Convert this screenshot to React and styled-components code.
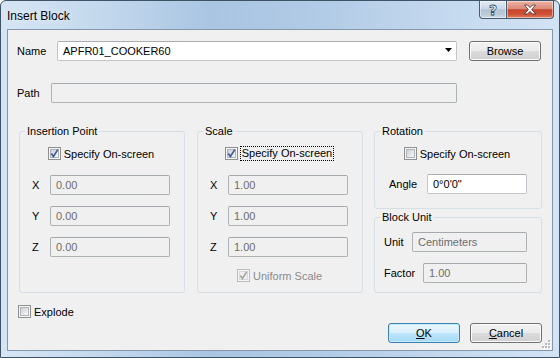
import styled, { createGlobalStyle } from "styled-components";

const GlobalStyle = createGlobalStyle`
  html, body { margin: 0; padding: 0; background: #fff; }
  body { font-family: "Liberation Sans", Arial, sans-serif; font-size: 11px; color: #000; }
`;

const Window = styled.div`
  width: 560px;
  height: 358px;
  box-sizing: border-box;
  display: flex;
  flex-direction: column;
  border: 1px solid #3f5367;
  border-radius: 6px 6px 0 0;
  background: linear-gradient(90deg, #d6e5f4 0%, #c3d8ed 18%, #a9c5e2 38%, #b2cbe6 58%, #c6daef 82%, #d2e3f4 100%);
  overflow: hidden;
`;

const TitleBar = styled.div`
  height: 28px;
  display: flex;
  align-items: flex-start;
`;

const TitleText = styled.span`
  margin: 8px 0 0 6px;
  font-size: 12px;
  line-height: 15px;
  text-shadow: 0 0 6px rgba(255, 255, 255, 0.9);
`;

const CaptionButtons = styled.div`
  margin-left: auto;
  margin-right: 5px;
  display: flex;
`;

const CaptionButton = styled.div`
  width: ${p => p.$w}px;
  height: 18px;
  box-sizing: border-box;
  display: grid;
  place-items: center;
  border: 1px solid #4a5c70;
  border-top: none;
  border-left-width: ${p => (p.$close ? 0 : 1)}px;
  border-radius: ${p => (p.$close ? "0 0 4px 0" : "0 0 0 4px")};
  background: ${p =>
    p.$close
      ? "linear-gradient(#ebb3a6 0%, #dc8a78 45%, #c6442d 52%, #cf5238 78%, #e27d5f 100%)"
      : "linear-gradient(#e4ecf4 0%, #cad7e5 45%, #b3c4d6 52%, #bccbdb 80%, #cfdbe8 100%)"};
  box-shadow: inset 0 0 0 1px rgba(255, 255, 255, 0.45);
`;

const HelpGlyph = styled.span`
  font-family: "DejaVu Sans", sans-serif;
  font-weight: bold;
  font-size: 14px;
  line-height: 14px;
  color: #fff;
  -webkit-text-stroke: 0.8px #3b4656;
`;

const Client = styled.div`
  flex: 1;
  position: relative;
  margin: 0 6px 6px 6px;
  border: 1px solid #8797ab;
  background: #f0f0f0;
  padding: 11px 10px 0 9px;
  display: flex;
  flex-direction: column;
`;

const Row = styled.div`
  display: flex;
  align-items: center;
  height: 20px;
  margin-top: ${p => p.$mt || 0}px;
  margin-left: ${p => p.$ml || 0}px;
`;

const Label = styled.span`
  width: ${p => p.$w}px;
  flex-shrink: 0;
  white-space: nowrap;
`;

const TextBox = styled.div`
  width: ${p => p.$w}px;
  height: 20px;
  box-sizing: border-box;
  display: flex;
  align-items: center;
  padding-left: 5px;
  border: 1px solid ${p => (p.$disabled ? "#adb2b5" : "#c2c6cc")};
  border-top-color: ${p => (p.$disabled ? "#a4a9ad" : "#abadb3")};
  border-radius: 2px;
  background: ${p => (p.$disabled ? "#f0f0f0" : "#fff")};
  color: ${p => (p.$disabled ? "#6d6d6d" : "#000")};
  white-space: nowrap;
`;

const Combo = styled(TextBox)`
  padding-right: 4px;
  justify-content: space-between;
`;

const Button = styled.div`
  width: 72px;
  height: 20px;
  box-sizing: border-box;
  display: grid;
  place-items: center;
  border: 1px solid ${p => (p.$default ? "#3c7fb1" : "#707070")};
  border-radius: 3px;
  background: ${p =>
    p.$default
      ? "linear-gradient(#eaf6fd 0%, #d9f0fc 50%, #bee6fd 50%, #a7d9f5 100%)"
      : "linear-gradient(#f2f2f2 0%, #ebebeb 50%, #dddddd 50%, #cfcfcf 100%)"};
  box-shadow: inset 0 0 0 1px ${p => (p.$default ? "#c4ebfd" : "#fcfcfc")};
  u { text-decoration: underline; }
`;

const GroupsRow = styled.div`
  display: grid;
  grid-template-columns: 166px 166px 167px;
  column-gap: 12px;
  margin: 22px 0 0 2px;
  & > :nth-child(3) { margin-left: -1px; }
`;

const Stack = styled.div`
  display: flex;
  flex-direction: column;
  gap: 2px;
`;

const Group = styled.fieldset`
  margin: 0;
  padding: 0;
  min-width: 0;
  box-sizing: border-box;
  height: ${p => p.$h}px;
  border: 1px solid #d5dfe5;
  border-radius: 3px;
`;

const Legend = styled.legend`
  margin-left: 5px;
  padding: 0 2px;
  line-height: 13px;
  font-size: 11px;
`;

const GroupBody = styled.div`
  display: flex;
  flex-direction: column;
  padding: ${p => p.$pt}px 0 0 ${p => p.$pl}px;
`;

const CheckRow = styled.div`
  display: flex;
  align-items: center;
  gap: 3px;
  height: 13px;
  justify-content: ${p => (p.$center ? "center" : "flex-start")};
  margin-top: ${p => p.$mt || 0}px;
  margin-left: ${p => p.$ml || 0}px;
  color: ${p => (p.$disabled ? "#8a8a8a" : "#000")};
  white-space: nowrap;
`;

const Box = styled.span`
  width: 13px;
  height: 13px;
  box-sizing: border-box;
  display: grid;
  place-items: center;
  flex-shrink: 0;
  border: 1px solid ${p => (p.$disabled ? "#bcbcbc" : "#8e8f8f")};
  background: #f6f6f6;
  &::before {
    content: "";
    grid-area: 1 / 1;
    width: 9px;
    height: 9px;
    box-sizing: border-box;
    border: 1px solid ${p => (p.$disabled ? "#d8d8d8" : "#aeb3b9")};
    background: ${p =>
      p.$disabled
        ? "#f0f0f0"
        : "linear-gradient(135deg, #cbcfd5 0%, #e6e8ea 60%, #f7f7f7 100%)"};
  }
  svg { grid-area: 1 / 1; }
`;

const Focus = styled.span`
  outline: 1px dotted #000;
  outline-offset: 0;
  padding: 0 1px;
  line-height: 13px;
`;

const Grip = styled.svg`
  position: absolute;
  right: 1px;
  bottom: 1px;
`;

function Check({ checked, disabled }) {
  return (
    <Box $disabled={disabled}>
      {checked && (
        <svg width="11" height="11" viewBox="0 0 11 11">
          <path
            d="M2.3 5.6 L4.4 8.4 L8.8 1.6"
            fill="none"
            stroke={disabled ? "#a5a5a5" : "#3f5b95"}
            strokeWidth="1.7"
          />
        </svg>
      )}
    </Box>
  );
}

function Coord({ axis, value, first }) {
  return (
    <Row $mt={first ? 15 : 11}>
      <Label $w={18}>{axis}</Label>
      <TextBox $w={120} $disabled>{value}</TextBox>
    </Row>
  );
}

export default function App() {
  return (
    <>
      <GlobalStyle />
      <Window>
        <TitleBar>
          <TitleText>Insert Block</TitleText>
          <CaptionButtons>
            <CaptionButton $w={28}>
              <HelpGlyph>?</HelpGlyph>
            </CaptionButton>
            <CaptionButton $w={47} $close>
              <svg width="14" height="11" viewBox="0 0 14 11">
                <path
                  d="M1.5 1 H4.5 L7 3.6 L9.5 1 H12.5 L8.7 5.5 L12.5 10 H9.5 L7 7.4 L4.5 10 H1.5 L5.3 5.5 Z"
                  fill="#fff"
                  stroke="#3c2a26"
                  strokeWidth="0.8"
                  strokeLinejoin="round"
                />
              </svg>
            </CaptionButton>
          </CaptionButtons>
        </TitleBar>

        <Client>
          <Row>
            <Label $w={40}>Name</Label>
            <Combo $w={400}>
              <span>APFR01_COOKER60</span>
              <svg width="7" height="4" viewBox="0 0 7 4" style={{ marginBottom: 2 }}>
                <polygon points="0,0 7,0 3.5,4" fill="#000" />
              </svg>
            </Combo>
            <Button style={{ marginLeft: 12 }}>Browse</Button>
          </Row>

          <Row $mt={22}>
            <Label $w={34}>Path</Label>
            <TextBox $w={406} $disabled />
          </Row>

          <GroupsRow>
            <Group $h={168}>
              <Legend>Insertion Point</Legend>
              <GroupBody $pt={9} $pl={12}>
                <CheckRow $center style={{ marginLeft: -14 }}>
                  <Check checked />
                  <span>Specify On-screen</span>
                </CheckRow>
                <Coord axis="X" value="0.00" first />
                <Coord axis="Y" value="0.00" />
                <Coord axis="Z" value="0.00" />
              </GroupBody>
            </Group>

            <Group $h={168}>
              <Legend>Scale</Legend>
              <GroupBody $pt={9} $pl={12}>
                <CheckRow $center style={{ marginLeft: -14 }}>
                  <Check checked />
                  <Focus>Specify On-screen</Focus>
                </CheckRow>
                <Coord axis="X" value="1.00" first />
                <Coord axis="Y" value="1.00" />
                <Coord axis="Z" value="1.00" />
                <CheckRow $mt={12} $ml={27} $disabled>
                  <Check checked disabled />
                  <span>Uniform Scale</span>
                </CheckRow>
              </GroupBody>
            </Group>

            <Stack>
              <Group $h={84}>
                <Legend>Rotation</Legend>
                <GroupBody $pt={9} $pl={14}>
                  <CheckRow $center style={{ marginLeft: -16 }}>
                    <Check />
                    <span>Specify On-screen</span>
                  </CheckRow>
                  <Row $mt={14}>
                    <Label $w={38}>Angle</Label>
                    <TextBox $w={100}>0°0'0"</TextBox>
                  </Row>
                </GroupBody>
              </Group>
              <Group $h={82}>
                <Legend>Block Unit</Legend>
                <GroupBody $pt={8} $pl={9}>
                  <Row>
                    <Label $w={28}>Unit</Label>
                    <TextBox $w={115} $disabled>Centimeters</TextBox>
                  </Row>
                  <Row $mt={11}>
                    <Label $w={39}>Factor</Label>
                    <TextBox $w={104} $disabled>1.00</TextBox>
                  </Row>
                </GroupBody>
              </Group>
            </Stack>
          </GroupsRow>

          <CheckRow $mt={12} $ml={1}>
            <Check />
            <span>Explode</span>
          </CheckRow>

          <Row $mt={5} style={{ justifyContent: "flex-end", gap: 10 }}>
            <Button $default>
              <span><u>O</u>K</span>
            </Button>
            <Button>
              <span><u>C</u>ancel</span>
            </Button>
          </Row>

          <Grip width="10" height="10" viewBox="0 0 10 10">
            {[[7, 1], [4, 4], [7, 4], [1, 7], [4, 7], [7, 7]].map(([x, y]) => (
              <g key={`${x}-${y}`}>
                <rect x={x + 1} y={y + 1} width="2" height="2" fill="#fff" />
                <rect x={x} y={y} width="2" height="2" fill="#b8bcc2" />
              </g>
            ))}
          </Grip>
        </Client>
      </Window>
    </>
  );
}
